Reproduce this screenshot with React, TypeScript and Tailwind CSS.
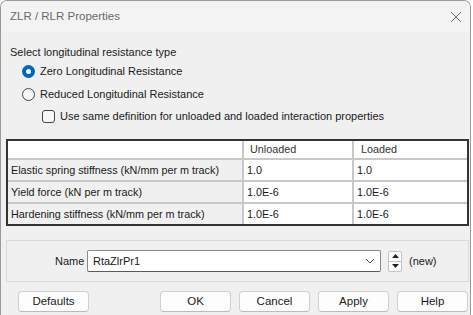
import React from "react";

const F = { fontFamily: '"Liberation Sans", Arial, sans-serif' };

function Radio({ checked }: { checked: boolean }) {
  return checked ? (
    <span className="w-[13px] h-[13px] rounded-full bg-[#0067c0] flex items-center justify-center shrink-0">
      <span className="w-[5px] h-[5px] rounded-full bg-white" />
    </span>
  ) : (
    <span className="w-[13px] h-[13px] rounded-full border border-[#444444] bg-[#f7f7f7] shrink-0" />
  );
}

function Btn({ label }: { label: string }) {
  return (
    <div className="w-[71px] h-[21px] shrink-0 rounded-[4px] border border-[#d0d0d0] border-b-[#bcbcbc] bg-[#fdfdfd] flex items-center justify-center text-[11.5px] text-[#1a1a1a]">
      {label}
    </div>
  );
}

const rows = [
  ["Elastic spring stiffness (kN/mm per m track)", "1.0", "1.0"],
  ["Yield force (kN per m track)", "1.0E-6", "1.0E-6"],
  ["Hardening stiffness (kN/mm per m track)", "1.0E-6", "1.0E-6"],
];

export default function App() {
  return (
    <div className="w-[473px] h-[315px] bg-white overflow-hidden" style={F}>
      <div className="w-[471px] h-[315px] border-l border-t border-r border-[#9a9a9a] rounded-tl-[7px] rounded-tr-[7px] overflow-hidden flex flex-col bg-[#f0f0f0]">
        <div className="h-[31px] shrink-0 bg-[#f3f3f3] flex items-center justify-between pl-[9px] pr-[7px]">
          <span className="text-[11.5px] text-[#6a6a6a]">ZLR / RLR Properties</span>
          <svg width="12" height="12" viewBox="0 0 12 12" className="mr-[1px]">
            <path d="M1 1 L11 11 M11 1 L1 11" stroke="#707070" strokeWidth="1" />
          </svg>
        </div>
        <div className="flex-1 flex flex-col pl-[5px] text-[11px] text-[#1a1a1a]">
          <div className="mt-[13px] pl-[4px] leading-[14px]">Select longitudinal resistance type</div>
          <div className="mt-[4px] pl-[16px] flex items-center gap-[5px] h-[17px]">
            <Radio checked />
            <span>Zero Longitudinal Resistance</span>
          </div>
          <div className="mt-[6px] pl-[16px] flex items-center gap-[5px] h-[17px]">
            <Radio checked={false} />
            <span>Reduced Longitudinal Resistance</span>
          </div>
          <div className="mt-[5px] pl-[36px] flex items-center gap-[5px] h-[17px]">
            <span className="w-[13px] h-[13px] rounded-[3px] border border-[#444444] bg-[#f7f7f7] shrink-0" />
            <span>Use same definition for unloaded and loaded interaction properties</span>
          </div>
          <div className="mt-[14px] w-[463px] border-2 border-[#333333] bg-[#c8c8c8] grid grid-cols-[234px_108px_113px] gap-[2px] text-[10.8px]">
            <div className="h-[17px] bg-white" />
            <div className="h-[17px] bg-white flex items-center pl-[6px] text-[#333]">Unloaded</div>
            <div className="h-[17px] bg-white flex items-center pl-[7px] text-[#333]">Loaded</div>
            {rows.map((r) => (
              <React.Fragment key={r[0]}>
                <div className="h-[20px] bg-[#f0f0f0] flex items-center pl-[3px]">{r[0]}</div>
                <div className="h-[20px] bg-white flex items-center pl-[3px]">{r[1]}</div>
                <div className="h-[20px] bg-white flex items-center pl-[3px]">{r[2]}</div>
              </React.Fragment>
            ))}
          </div>
          <div className="mt-[14px] w-[463px] h-[42px] border border-[#dadada] flex items-center">
            <span className="ml-[48px] w-[32px] shrink-0">Name</span>
            <div className="w-[294px] h-[22px] shrink-0 bg-white border border-[#8a8a8a] border-b-[#5a5a5a] rounded-[2px] flex items-center justify-between pl-[5px] pr-[5px]">
              <span>RtaZlrPr1</span>
              <svg width="10" height="6" viewBox="0 0 10 6">
                <path d="M1 1 L5 5 L9 1" fill="none" stroke="#555" strokeWidth="1" />
              </svg>
            </div>
            <div className="ml-[7px] w-[14px] h-[21px] shrink-0 border border-[#c4c4c4] bg-white rounded-[2px] flex flex-col">
              <div className="flex-1 flex items-center justify-center border-b border-[#c4c4c4]">
                <svg width="7" height="4" viewBox="0 0 7 4"><path d="M0 4 L3.5 0 L7 4 Z" fill="#222" /></svg>
              </div>
              <div className="flex-1 flex items-center justify-center">
                <svg width="7" height="4" viewBox="0 0 7 4"><path d="M0 0 L3.5 4 L7 0 Z" fill="#222" /></svg>
              </div>
            </div>
            <span className="ml-[7px]">(new)</span>
          </div>
          <div className="mt-[9px] flex pl-[12px]">
            <Btn label="Defaults" />
            <div className="ml-[71px] flex gap-[8px]">
              <Btn label="OK" />
              <Btn label="Cancel" />
              <Btn label="Apply" />
              <Btn label="Help" />
            </div>
          </div>
        </div>
      </div>
    </div>
  );
}
